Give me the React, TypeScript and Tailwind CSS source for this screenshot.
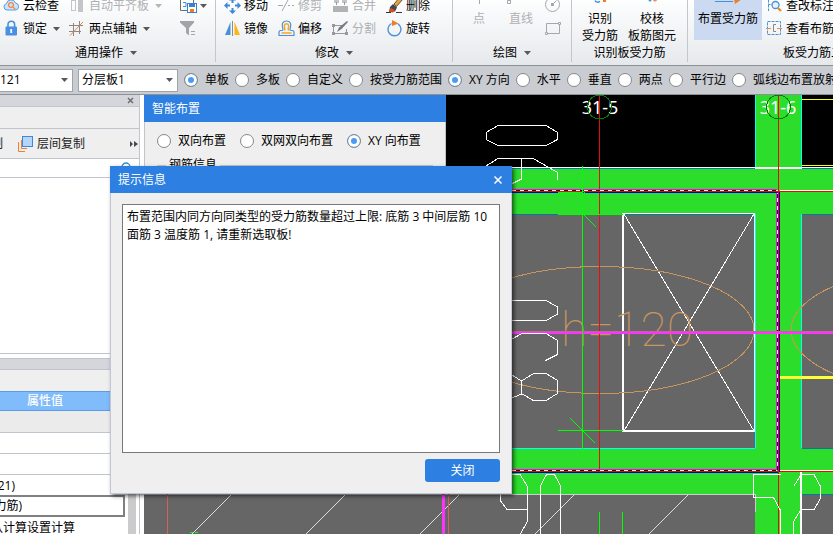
import { useState } from 'react';
import type { ReactNode } from 'react';
import clsx from 'clsx';

const SCOPE_MODES = ['单板', '多板', '自定义', '按受力筋范围'];
const DIRECTION_MODES = ['XY 方向', '水平', '垂直', '两点', '平行边', '弧线边布置放射筋'];
const LAYOUT_MODES = ['双向布置', '双网双向布置', 'XY 向布置'];

const LIMIT_MESSAGE =
  '布置范围内同方向同类型的受力筋数量超过上限: 底筋 3 中间层筋 10\n面筋 3 温度筋 1, 请重新选取板!';

function Caret({ muted = false }: { muted?: boolean }) {
  return (
    <svg width="7" height="4" viewBox="0 0 7 4" className={clsx('shrink-0', muted ? 'fill-[#b4b6b9]' : 'fill-[#55585c]')}>
      <path d="M0 0h7L3.5 4z" />
    </svg>
  );
}

/* ---------- ribbon icons ---------- */

function Icon({ children }: { children: ReactNode }) {
  return (
    <svg width="17" height="17" viewBox="0 0 17 17" fill="none" className="shrink-0">
      {children}
    </svg>
  );
}

function CloudIcon() {
  return (
    <Icon>
      <path d="M4 13a3.2 3.2 0 0 1-.6-6.3A4.8 4.8 0 0 1 12.6 6 3.6 3.6 0 0 1 13 13z" fill="#cfe3f8" stroke="#5a9be0" />
      <circle cx="8" cy="8" r="2.4" stroke="#ee8a4a" strokeWidth="1.3" />
      <path d="m10 10 2.4 2.4" stroke="#ee8a4a" strokeWidth="1.3" />
    </Icon>
  );
}

function LockIcon() {
  return (
    <Icon>
      <path d="M5 7V4.5a3.3 3.3 0 0 1 6.6 0V7" stroke="#4a90d9" strokeWidth="1.6" />
      <rect x="2.5" y="6.5" width="11.5" height="9" rx="1" fill="#4a90e2" />
      <path d="M8.2 9v4" stroke="#fff" strokeWidth="1.8" />
    </Icon>
  );
}

function AlignIcon() {
  return (
    <Icon>
      <rect x="2.5" y="3.5" width="4" height="10" stroke="#c3c5c8" />
      <rect x="9" y="2" width="5" height="13" fill="#c3c5c8" />
    </Icon>
  );
}

function AxisIcon() {
  return (
    <Icon>
      <path d="M0 5.500h14M0 11.500h12M4.500 3v13M10.500 1v13" stroke="#85888c" />
      <path d="M1 15.500 14 2" stroke="#f08030" />
    </Icon>
  );
}

function SaveIcon() {
  return (
    <Icon>
      <path d="M7 13.500H.5v-11h13V6" stroke="#6b7075" />
      <path d="M3 5.500h3v4H3" stroke="#4a90d9" />
      <rect x="7.500" y="6.500" width="9" height="9" fill="#fff" stroke="#3a7fd0" />
      <path d="M9 7h6v3H9z" fill="#3a7fd0" />
      <path d="M10 12h4v3h-4z" fill="#ee7d28" />
    </Icon>
  );
}

function FilterIcon() {
  return (
    <Icon>
      <path d="M0 1h14v1.500l-5 5.500v7.500L6 13V8L0 2.500z" fill="#a2a4a7" />
      <path d="M11 11.500h4M11 14.500h4" stroke="#a2a4a7" />
    </Icon>
  );
}

function MoveIcon() {
  return (
    <Icon>
      <path
        d="M8.500 0 12 3.500H9.500V6h-2V3.500H5zM8.500 17 5 13.500h2.500V11h2v2.500H12zM0 8.500 3.500 5v2.500H6v2H3.500V12zM17 8.500 13.500 12V9.500H11v-2h2.500V5z"
        fill="#3f87d8"
      />
    </Icon>
  );
}

function MirrorIcon() {
  return (
    <Icon>
      <path d="M6.500 2v13H1z" fill="#4a90d9" />
      <path d="M10.500 2v13H16z" fill="#fdb515" />
      <path d="M8.500 1v15" stroke="#8a8d91" />
    </Icon>
  );
}

function TrimIcon() {
  return (
    <Icon>
      <path d="M0 8.500h5M10 8.500h2M14 8.500h2" stroke="#a5a7aa" />
      <path d="m4 14 6-11" stroke="#a5a7aa" />
    </Icon>
  );
}

function OffsetIcon() {
  return (
    <Icon>
      <path
        d="M1 15.500v-3c0-1 .6-2 1.800-2H4c1 0 1.200-1 .8-2C3 4 5 1 8.500 1s5.500 3 3.700 7.500c-.4 1-.2 2 .8 2h1.200c1.200 0 1.800 1 1.800 2v3z"
        stroke="#4a90d9"
        strokeWidth="1.200"
      />
      <path
        d="M3.500 13h10M6.300 10.500C8 8 5.500 7.500 6.500 5c.8-1.800 3.200-1.800 4 0 1 2.500-1.500 3 .2 5.500"
        stroke="#f5a623"
        strokeWidth="1.500"
      />
    </Icon>
  );
}

function MergeIcon() {
  return (
    <Icon>
      <path d="M1 9h15v6H1z" fill="#b0b2b5" />
      <path d="M2 2h5v4H2zM10 2h5v4h-5z" fill="#c3c5c8" />
      <path d="M4.500 5v3M12.500 5v3" stroke="#98999c" />
    </Icon>
  );
}

function SplitIcon() {
  return (
    <Icon>
      <path d="M10 5.500H1.500v8h13V9" stroke="#98999c" />
      <path d="m5 12 2-4.500L15 1l1 1-6.500 7z" fill="#77797c" />
      <path d="M0 4h3v3H0zM0 12h3v3H0zM13 12h3v3h-3z" fill="#98999c" />
    </Icon>
  );
}

function BrushIcon() {
  return (
    <Icon>
      <path d="m8 7 6-7 3 2-6.500 7.500z" fill="#e8a33a" stroke="#33353a" strokeWidth=".8" />
      <path d="m7 7 4 3.500-2 4L3 15l1-5z" fill="#44464b" />
      <path d="M4.500 11 9 13l-2 2.500-4-.5z" fill="#d9501e" />
      <path d="M0 15.500h5M10 15.500h6" stroke="#33353a" />
    </Icon>
  );
}

function RotateIcon() {
  return (
    <Icon>
      <path d="M5.500 3.500a6.500 6.500 0 1 0 6.500.3" stroke="#4a90d9" strokeWidth="1.400" />
      <path d="M6 0v6l6.500-2.500z" fill="#ee7d28" />
    </Icon>
  );
}

function CircleToolIcon() {
  return (
    <Icon>
      <circle cx="7.500" cy="7.500" r="7" stroke="#a5a7aa" />
      <path d="m7.500 7.500 4-4" stroke="#a5a7aa" />
      <path d="M6 6h3v3H6z" fill="#a5a7aa" />
    </Icon>
  );
}

function RectToolIcon() {
  return (
    <Icon>
      <path d="M2 13.500h12.500V5M13 3.500H1.500V12" stroke="#a5a7aa" />
      <path d="M.5 12.500h2v2h-2zM13.500 2.500h2v2h-2z" stroke="#a5a7aa" />
    </Icon>
  );
}

function CheckMarkIcon() {
  return (
    <Icon>
      <path d="M0 2.500h7M2.500 2.500v5h5M2.500 7.500V14" stroke="#4a90d9" strokeDasharray="3 1" />
      <circle cx="9.500" cy="8" r="3.500" fill="#e8f2fd" stroke="#4a90d9" strokeWidth="1.300" />
      <path d="m12 11 3 3" stroke="#ee8a1e" strokeWidth="2.200" />
    </Icon>
  );
}

function ViewRebarIcon() {
  return (
    <Icon>
      <rect x="1.500" y="1.500" width="13" height="13" stroke="#4a90d9" strokeDasharray="3 1" />
      <path d="M0 8.500h5M11 8.500h5" stroke="#ee8a4a" />
      <path d="M10 4.500H7.500v7H10" stroke="#85888c" />
    </Icon>
  );
}

/* ---------- ribbon ---------- */

interface ToolProps {
  icon: ReactNode;
  label?: string;
  menu?: boolean;
  disabled?: boolean;
}

function Tool({ icon, label, menu, disabled }: ToolProps) {
  return (
    <button
      type="button"
      disabled={disabled}
      aria-label={label ? undefined : '工具'}
      className="flex h-[23px] items-center gap-[3px] whitespace-nowrap disabled:text-[#aeb0b3]"
    >
      {icon}
      {label}
      {menu && (
        <span className={clsx(label && 'pl-[3px]')}>
          <Caret muted={disabled} />
        </span>
      )}
    </button>
  );
}

interface GroupProps {
  title: string;
  menu?: boolean;
  className: string;
  children: ReactNode;
}

function RibbonGroup({ title, menu, className, children }: GroupProps) {
  return (
    <section className={clsx('flex h-full shrink-0 flex-col justify-end', className)}>
      <div className="flex items-end">{children}</div>
      <h2 className="flex h-[25px] shrink-0 items-center justify-center gap-[7px] whitespace-nowrap">
        {title}
        {menu && <Caret />}
      </h2>
    </section>
  );
}

function Divider() {
  return <div className="h-[62px] w-px shrink-0 bg-[#c3c6ca]" />;
}

function Ribbon() {
  return (
    <header className="flex h-[66px] shrink-0 overflow-hidden border-b border-[#8e9196] bg-linear-to-b from-[#fdfefe] to-[#e6e9ec]">
      <RibbonGroup title="通用操作" menu className="w-[215px] pr-[6px] pl-[3px]">
        <div className="w-[66px]">
          <Tool icon={<CloudIcon />} label="云检查" />
          <Tool icon={<LockIcon />} label="锁定" menu />
        </div>
        <div className="w-[111px]">
          <Tool icon={<AlignIcon />} label="自动平齐板" menu disabled />
          <Tool icon={<AxisIcon />} label="两点辅轴" menu />
        </div>
        <div>
          <Tool icon={<SaveIcon />} menu />
          <Tool icon={<FilterIcon />} />
        </div>
      </RibbonGroup>
      <Divider />
      <RibbonGroup title="修改" menu className="w-[236px]">
        <div className="grid grid-cols-[repeat(4,54px)] pl-2">
          <Tool icon={<MoveIcon />} label="移动" />
          <Tool icon={<TrimIcon />} label="修剪" disabled />
          <Tool icon={<MergeIcon />} label="合并" disabled />
          <Tool icon={<BrushIcon />} label="删除" />
          <Tool icon={<MirrorIcon />} label="镜像" />
          <Tool icon={<OffsetIcon />} label="偏移" />
          <Tool icon={<SplitIcon />} label="分割" disabled />
          <Tool icon={<RotateIcon />} label="旋转" />
        </div>
      </RibbonGroup>
      <Divider />
      <RibbonGroup title="绘图" menu className="w-[118px]">
        <div className="flex h-[46px] items-start pl-5 text-[#aeb0b3]">
          <button type="button" disabled className="flex w-3 flex-col items-center">
            <svg width="9" height="16" viewBox="0 0 9 16" stroke="#a5a7aa">
              <path d="M0 5.500h9M4.500 0v10" />
            </svg>
            <span className="leading-[17px]">点</span>
          </button>
          <button type="button" disabled className="ml-3 flex w-12 flex-col items-center">
            <svg width="28" height="16" viewBox="0 0 28 16" fill="none" stroke="#a5a7aa">
              <path d="M.5 6.500h3v3h-3zM3 7l9-9" />
            </svg>
            <span className="leading-[17px]">直线</span>
          </button>
          <div>
            <Tool icon={<CircleToolIcon />} disabled />
            <Tool icon={<RectToolIcon />} disabled />
          </div>
        </div>
      </RibbonGroup>
      <Divider />
      <RibbonGroup title="识别板受力筋" className="w-[115px]">
        <div className="flex h-[46px] items-start">
          <button type="button" className="flex w-14 flex-col items-center leading-[17px]">
            <svg width="17" height="16" viewBox="0 0 17 16" fill="none">
              <path d="M3 6.500c1 2 3 2 5 1" stroke="#4a90d9" strokeWidth="1.500" />
              <path d="M11 5h3v3h-3z" fill="#ee7d28" />
            </svg>
            <span>识别</span>
            <span>受力筋</span>
          </button>
          <button type="button" className="flex w-12 flex-col items-center leading-[17px]">
            <svg width="17" height="16" viewBox="0 0 17 16">
              <circle cx="6" cy="6" r="1.500" fill="#4a90d9" />
              <circle cx="11" cy="5.500" r="2" fill="#f08a6a" />
            </svg>
            <span>校核</span>
            <span>板筋图元</span>
          </button>
        </div>
      </RibbonGroup>
      <Divider />
      <RibbonGroup title="板受力筋二次编辑" className="w-[280px] pl-[6px]">
        <button type="button" className="flex h-[46px] w-[68px] flex-col items-center bg-[#cbdaf0] leading-[17px]">
          <svg width="34" height="16" viewBox="0 0 34 16" fill="none">
            <path d="M4 7.500h18" stroke="#4a90d9" />
            <path d="M23 5h8l-7 5z" fill="#ee7d28" />
          </svg>
          <span>布置受力筋</span>
        </button>
        <div className="pl-1">
          <Tool icon={<CheckMarkIcon />} label="查改标注" />
          <Tool icon={<ViewRebarIcon />} label="查看布筋" />
        </div>
      </RibbonGroup>
    </header>
  );
}

/* ---------- option bar ---------- */

interface RadioProps {
  name: string;
  label: string;
  checked: boolean;
  onChange: () => void;
}

function Radio({ name, label, checked, onChange }: RadioProps) {
  return (
    <label className="flex shrink-0 items-center gap-[7px] whitespace-nowrap">
      <input
        type="radio"
        name={name}
        checked={checked}
        onChange={onChange}
        className="size-[14px] appearance-none rounded-full border border-[#85888c] bg-white checked:bg-[#4a9bf8] checked:shadow-[inset_0_0_0_3px_white]"
      />
      {label}
    </label>
  );
}

function ComboBox({ label, value, className }: { label: string; value: string; className: string }) {
  return (
    <div className="relative flex shrink-0 items-center">
      <select
        aria-label={label}
        defaultValue={value}
        className={clsx('h-[23px] appearance-none border border-[#a0a3a8] bg-white leading-[18px]', className)}
      >
        <option>{value}</option>
      </select>
      <span className="pointer-events-none absolute right-[5px]">
        <Caret />
      </span>
    </div>
  );
}

function OptionBar() {
  const [scope, setScope] = useState(SCOPE_MODES[0]);
  const [direction, setDirection] = useState(DIRECTION_MODES[0]);

  return (
    <div className="flex h-[29px] shrink-0 items-center overflow-hidden border-b border-[#8e9196] bg-[#c9ccd1]">
      <ComboBox label="构件" value="121" className="w-[73px] border-l-0" />
      <div className="pl-[5px]">
        <ComboBox label="板层" value="分层板1" className="w-[100px] pl-[3px]" />
      </div>
      <div className="flex gap-[6px] pl-[6px]">
        {SCOPE_MODES.map((mode) => (
          <Radio key={mode} name="scope" label={mode} checked={scope === mode} onChange={() => setScope(mode)} />
        ))}
        {DIRECTION_MODES.map((mode) => (
          <Radio
            key={mode}
            name="direction"
            label={mode}
            checked={direction === mode}
            onChange={() => setDirection(mode)}
          />
        ))}
      </div>
    </div>
  );
}

/* ---------- left panel ---------- */

function SidePanel() {
  return (
    <aside className="flex w-36 shrink-0 bg-white">
      <div className="flex w-[140px] flex-col overflow-hidden border-r border-[#c0c4cc]">
        <div className="flex h-3 shrink-0 items-center justify-end border-b border-[#c0c4cc] bg-[#d4d6db] pr-[5px]">
          <button type="button" aria-label="关闭面板">
            <svg width="7" height="7" viewBox="0 0 7 7" stroke="#6b6e73" strokeWidth="1.500">
              <path d="m1 1 5 5M6 1 1 6" />
            </svg>
          </button>
        </div>
        <div className="h-[22px] shrink-0 border-b border-[#c0c4cc] bg-[#efefef]" />
        <div className="flex h-[30px] shrink-0 items-center border-b border-[#c0c4cc] bg-[#efefef] text-[#222]">
          <button type="button" className="flex w-[3px] justify-end overflow-hidden whitespace-nowrap">
            复制
          </button>
          <button type="button" className="flex grow items-center gap-1 pl-[14px]">
            <svg width="16" height="16" viewBox="0 0 16 16" fill="none">
              <path d="M1.500 6v9.500H8M4.500 4v8.500H10" stroke="#ee8030" />
              <rect x="5.500" y=".500" width="10" height="10" fill="#b5d6fa" stroke="#3f87d8" />
            </svg>
            层间复制
          </button>
          <button type="button" aria-label="更多" className="pr-px">
            <svg width="8" height="6" viewBox="0 0 8 6" fill="#44474b">
              <path d="m0 0 3 3-3 3zM4 0l4 3-4 3z" />
            </svg>
          </button>
        </div>
        <div className="flex h-[19px] shrink-0 items-start justify-end border-b border-[#c0c4cc] pt-[3px] pr-2">
          <svg width="10" height="12" viewBox="0 0 10 12" fill="none" stroke="#3a8fc0" strokeWidth="1.300">
            <circle cx="5" cy="5" r="4" />
          </svg>
        </div>
        <div className="h-[176px] shrink-0 border-b border-[#c0c4cc]" />
        <div className="mt-1 h-3 shrink-0 border-y border-[#c0c4cc] bg-[#d4d6db]" />
        <div className="h-[21px] shrink-0 bg-[#efefef]" />
        <div className="flex h-5 shrink-0 items-end border-y border-[#5b9ce8] bg-[#80bbfb] pl-[27px] font-medium text-white">
          属性值
        </div>
        <div className="h-[22px] shrink-0 border-b border-[#c0c4cc] bg-[#ebebeb]" />
        <div className="h-[21px] shrink-0 border-b border-[#c0c4cc]" />
        <div className="h-[21px] shrink-0 border-b border-[#c0c4cc]" />
        <div className="flex shrink-0 gap-[3px]">
          <div className="w-[125px]">
            <div className="flex h-5 w-[15px] items-end justify-end">(121)</div>
            <div className="h-[22px] border-2 border-l-0 border-[#808080]">
              <div className="flex h-[18px] w-[22px] items-center justify-end whitespace-nowrap">(受力筋)</div>
            </div>
            <div className="flex h-5 w-[75px] items-end justify-end whitespace-nowrap">按默认计算设置计算</div>
          </div>
          <div className="w-2 bg-[#cbcbcb]" />
        </div>
      </div>
    </aside>
  );
}

/* ---------- model view ---------- */

const HATCH_STARTS = [231, 345, 459, 574, 688];

// Model coordinates are the window's own, so the view starts at 144,95
function ModelView() {
  return (
    <svg
      viewBox="144 95 689 439"
      preserveAspectRatio="xMinYMin slice"
      className="block h-full w-full"
      shapeRendering="crispEdges"
      fill="none"
    >
      <path d="M144 95h689v439H144z" fill="#666" />
      <path d="M144 95h689v73H144z" fill="#000" />

      {/* beams */}
      <path d="M144 168h689v46H144zM144 448h689v46H144zM755 95h47v439h-47z" fill="#2cdd2c" />
      <path d="M144 168.500h611M802 168.500h31M144 214.500h611M802 214.500h31M802 448.500h31M802 494.500h31" stroke="#0878a0" />
      <path d="M144 448.500h611M755.500 95v73M801.500 95v73M755.500 214v234M801.500 214v234" stroke="#0ff" />
      <path d="M144 167.500h611M802 167.500h31" stroke="#fff" />
      <path d="M755 168h47" stroke="#fff" strokeWidth="2" />
      <path d="M802 99.500h31M802 165.500h31M801.500 494v40" stroke="#ff0" />
      <path d="M144 494.500h611M755.500 494v18" stroke="#ccc" />

      {/* hatch of the slab below */}
      {HATCH_STARTS.map((x) => (
        <path key={x} d={`M${x} 495l-39 39`} stroke="#ddd" />
      ))}
      <path d="M167.500 494v40M448.500 494v40" stroke="#d46060" />
      <path d="M443.500 494v40" stroke="#f3f" strokeWidth="3" />
      <path d="M190 532.500h3M195 532.500h3M599.500 512v22M622.500 512v22" stroke="#0f0" />

      {/* slab opening */}
      <path d="M622 213.500h133M754.500 214v217M624 214l130 217M754 214 624 431" stroke="#fff" />
      <path d="M623 213v218h132" stroke="#fff" strokeWidth="2" />

      {/* slab tags */}
      <g stroke="#c8955f">
        <ellipse cx="600" cy="330" rx="154" ry="63.500" />
        <ellipse cx="945" cy="330" rx="154" ry="63.500" />
      </g>
      <text x="627" y="346" textAnchor="middle" fill="#c8955f" className="font-[Roboto,sans-serif] text-[48px] font-thin">
        h=120
      </text>

      {/* axes and picked boundary */}
      <path d="M599.500 95v375" stroke="#e01010" />
      <path d="M144 189.500h633M144 469.500h633M776.500 190v280" stroke="#f0f" />
      <path d="M144 190.500h633M144 470.500h633M777.500 190v280" stroke="#000" />
      <path d="M144 190.500h633M144 470.500h633M777.500 190v280" stroke="#fff" strokeDasharray="4 4" />
      <path d="M144 191.500h689M144 471.500h689" stroke="#f00" />
      <path d="M144 192.500h635M144 472.500h635M779.500 192v280" stroke="#00c" />
      <path d="M780 190.500h53M780 470.500h53" stroke="#fff" />
      <path d="M778.500 95v439" stroke="#f00" />
      <path d="M512 332.500h321" stroke="#f3f" strokeWidth="3" />
      <path d="M512 331.500h321" stroke="#c8609a" />
      <path d="M780 377.500h53" stroke="#ff3" strokeWidth="3" />

      {/* dimension line */}
      <path
        d="M582.500 166v289M558 214.500h65M558 192.500h24M558 430.500h65M570 178l26 26M571 202l25 25M570 418l25 25"
        stroke="#0f0"
      />

      {/* annotation strokes */}
      <g stroke="#fff">
        <path d="M498 125.500h48l11.500 7v7l-11.500 6h-48l-12-6v-7z" />
        <path d="M486 166l12-7.500h35l24.500 14v7M521.500 158v21l-10 5" />
        <path d="M505 300.500h41l11.500 6.500v7l-11.500 6.500h-41" />
        <path d="M512 339l10-5.500h24l11.500 7v14l-12 6" />
        <path d="M512 375l9.500 6 12-7.500h12.500l11.500 7v13l-11.500 7h-12.500l-12-7v-12.500M521.500 394l-9.500 4" />
        <path d="M505 474.500h15l7.500 12v35l-7.500 13M500 494v6l7 9.500h20" />
        <path d="M540.500 534v-48l6-11.500h8l6 11.500v48" />
        <path d="M781 474.500h-27.500v23h20l7 13v24" />
        <path d="M794 486l7-11.500h13l6.500 12v12l-6.500 11h-13l-7.500 12v13" />
        <path d="M801 472v62" strokeWidth="2" />
      </g>

      {/* axis heads */}
      <g fill="#fff" textAnchor="middle" className="font-['Noto_Sans',sans-serif] text-[18px]">
        <text x="600" y="114">31-5</text>
        <text x="778" y="114">31-6</text>
      </g>
      <g stroke="#008000">
        <circle cx="599.500" cy="107" r="12" />
        <circle cx="778.500" cy="107" r="12" />
      </g>
    </svg>
  );
}

/* ---------- windows over the model ---------- */

function LayoutWindow() {
  const [layout, setLayout] = useState(LAYOUT_MODES[2]);

  return (
    <div className="absolute top-0 left-0 h-[200px] w-[302px] bg-[#efefef]">
      <h2 className="flex h-[27px] items-center bg-[#2d80e2] pl-2 text-white">智能布置</h2>
      <div className="border-x border-[#c0c4cc]">
        <div className="flex h-[37px] items-end gap-[14px] pb-[9px] pl-3">
          {LAYOUT_MODES.map((mode) => (
            <Radio key={mode} name="layout" label={mode} checked={layout === mode} onChange={() => setLayout(mode)} />
          ))}
        </div>
        <fieldset className="mx-3 h-20 border border-[#c8c8c8]">
          <legend className="ml-2 px-[3px] leading-3">钢筋信息</legend>
        </fieldset>
      </div>
    </div>
  );
}

function MessageDialog() {
  return (
    <div
      role="dialog"
      aria-labelledby="dialog-title"
      className="absolute top-[166px] left-[110px] flex w-[402px] flex-col border border-t-0 border-[#c0c8d8] bg-[#efefef] shadow-[2px_2px_4px_rgba(0,0,0,0.6)]"
    >
      <div className="-mx-px flex h-[27px] items-center justify-between bg-[#2d80e2] pr-[10px] pl-2 text-white">
        <h1 id="dialog-title">提示信息</h1>
        <button type="button" aria-label="关闭窗口">
          <svg width="8" height="8" viewBox="0 0 8 8" stroke="#fff" strokeWidth="1.500">
            <path d="m.5.5 7 7M7.500.5l-7 7" />
          </svg>
        </button>
      </div>
      <div className="flex flex-col items-end px-[11px] pt-[11px] pb-[11px]">
        <textarea
          readOnly
          aria-label="提示内容"
          value={LIMIT_MESSAGE}
          className="block h-[249px] w-full resize-none overflow-hidden border border-[#787878] bg-white px-1 py-[3px] leading-[18px]"
        />
        <button type="button" className="mt-[6px] h-[23px] w-[75px] rounded-[3px] bg-[#2d80e2] text-white">
          关闭
        </button>
      </div>
    </div>
  );
}

function App() {
  return (
    <div className="relative flex h-screen flex-col overflow-hidden bg-white font-['Open_Sans','Noto_Sans_CJK_SC',sans-serif] text-[12px] leading-[18px] text-black">
      <Ribbon />
      <OptionBar />
      <main className="flex min-h-0 grow">
        <SidePanel />
        <div className="relative min-w-0 grow overflow-hidden">
          <ModelView />
          <LayoutWindow />
        </div>
      </main>
      <MessageDialog />
    </div>
  );
}

export default App;
